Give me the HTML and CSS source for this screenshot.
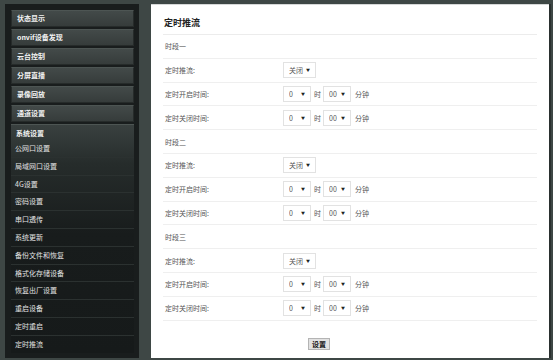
FILE: index.html
```html
<!DOCTYPE html>
<html lang="zh-CN">
<head>
    <meta charset="UTF-8">
    <meta name="viewport" content="width=device-width, initial-scale=1.0">
    <title>定时推流</title>
    <link rel="stylesheet" href="styles.css">
</head>
<body>
    <div class="page">
        <aside class="sidebar">
            <a class="menu-head">状态显示</a>
            <a class="menu-head">onvif设备发现</a>
            <a class="menu-head">云台控制</a>
            <a class="menu-head">分屏直播</a>
            <a class="menu-head">录像回放</a>
            <a class="menu-head">通道设置</a>
            <div class="menu-group">
                <a class="menu-head active">系统设置</a>
                <ul class="submenu">
                    <li>公网口设置</li>
                    <li>局域网口设置</li>
                    <li>4G设置</li>
                    <li>密码设置</li>
                    <li>串口透传</li>
                    <li>系统更新</li>
                    <li>备份文件和恢复</li>
                    <li>格式化存储设备</li>
                    <li>恢复出厂设置</li>
                    <li>重启设备</li>
                    <li>定时重启</li>
                    <li>定时推流</li>
                </ul>
            </div>
        </aside>

        <main class="content">
            <h2 class="title">定时推流</h2>

            <div class="row">时段一</div>
            <div class="row">
                <label class="label">定时推流:</label>
                <span class="sel sel-wide"><select><option>关闭</option><option>开启</option></select></span>
            </div>
            <div class="row">
                <label class="label">定时开启时间:</label>
                <span class="sel"><select><option>0</option></select></span>
                <span class="unit">时</span>
                <span class="sel"><select><option>00</option></select></span>
                <span class="unit unit-min">分钟</span>
            </div>
            <div class="row">
                <label class="label">定时关闭时间:</label>
                <span class="sel"><select><option>0</option></select></span>
                <span class="unit">时</span>
                <span class="sel"><select><option>00</option></select></span>
                <span class="unit unit-min">分钟</span>
            </div>

            <div class="row">时段二</div>
            <div class="row">
                <label class="label">定时推流:</label>
                <span class="sel sel-wide"><select><option>关闭</option><option>开启</option></select></span>
            </div>
            <div class="row">
                <label class="label">定时开启时间:</label>
                <span class="sel"><select><option>0</option></select></span>
                <span class="unit">时</span>
                <span class="sel"><select><option>00</option></select></span>
                <span class="unit unit-min">分钟</span>
            </div>
            <div class="row">
                <label class="label">定时关闭时间:</label>
                <span class="sel"><select><option>0</option></select></span>
                <span class="unit">时</span>
                <span class="sel"><select><option>00</option></select></span>
                <span class="unit unit-min">分钟</span>
            </div>

            <div class="row">时段三</div>
            <div class="row">
                <label class="label">定时推流:</label>
                <span class="sel sel-wide"><select><option>关闭</option><option>开启</option></select></span>
            </div>
            <div class="row">
                <label class="label">定时开启时间:</label>
                <span class="sel"><select><option>0</option></select></span>
                <span class="unit">时</span>
                <span class="sel"><select><option>00</option></select></span>
                <span class="unit unit-min">分钟</span>
            </div>
            <div class="row">
                <label class="label">定时关闭时间:</label>
                <span class="sel"><select><option>0</option></select></span>
                <span class="unit">时</span>
                <span class="sel"><select><option>00</option></select></span>
                <span class="unit unit-min">分钟</span>
            </div>

            <div class="actions">
                <button class="btn">设置</button>
            </div>
        </main>
    </div>
</body>
</html>
```

FILE: styles.css
```css
body {
    margin: 0;
    padding: 0;
    background-color: #3e4745;
    font-family: "Noto Sans CJK SC", "Liberation Sans", sans-serif;
    font-size: 7px;
}

.page {
    display: flex;
    gap: 12px;
    padding: 4px 0 0 5px;
    height: 360px;
    box-sizing: border-box;
}

.sidebar {
    width: 134px;
    height: 354px;
    padding: 6px 5px 0 6px;
    box-sizing: border-box;
    background-color: #191d1d;
    display: flex;
    flex-direction: column;
}

.menu-head {
    display: block;
    height: 17px;
    line-height: 15px;
    margin-bottom: 2px;
    padding-left: 5px;
    box-sizing: border-box;
    background: linear-gradient(#434a49, #363c3b);
    border: 1px solid #262b2a;
    border-top-color: #4d5553;
    color: #f2f2f2;
    font-weight: bold;
}

.menu-group {
    background: linear-gradient(#3a4140 0px, #262c2b 40px, #181c1c 110px, #161a1a);
}

.menu-head.active {
    height: 16px;
    margin-bottom: 0;
    background: transparent;
    border: none;
    border-top: 1px solid #4d5553;
    line-height: 16px;
}

.submenu {
    list-style: none;
    margin: 0;
    padding: 0;
}

.submenu li {
    height: 16.8px;
    line-height: 16.8px;
    border-bottom: 1px solid #2b3130;
    padding-left: 4px;
    color: #e2e2e2;
}

.submenu li:last-child {
    border-bottom: none;
}

.content {
    width: 398px;
    height: 354px;
    padding: 8px 12px 0 12px;
    box-sizing: border-box;
    background-color: #fff;
    border-top: 1px solid #d6d8d8;
    box-shadow: 2px 0 0 #2a302f;
}

.title {
    margin: 0;
    height: 21px;
    line-height: 20px;
    padding-left: 1px;
    font-size: 9px;
    color: #222;
    border-bottom: 1px solid #ececec;
}

.row {
    display: flex;
    align-items: center;
    height: 23.8px;
    padding-left: 2px;
    box-sizing: border-box;
    border-bottom: 1px solid #efefef;
    color: #555;
}

.label {
    width: 118px;
}

.sel {
    position: relative;
    display: inline-block;
    width: 28px;
    height: 16px;
}

.sel-wide {
    width: 33px;
}

.sel select {
    appearance: none;
    -webkit-appearance: none;
    width: 100%;
    height: 100%;
    margin: 0;
    padding: 0 0 0 5px;
    border: 1px solid #e2e2e2;
    border-radius: 0;
    background: #fff;
    font-family: inherit;
    font-size: 7px;
    color: #555;
    outline: none;
}

.sel::after {
    content: "\25BC";
    position: absolute;
    right: 6px;
    top: 5px;
    font-size: 4px;
    line-height: 6px;
    color: #222;
    pointer-events: none;
}

.unit {
    margin: 0 2px 0 3px;
    color: #555;
}

.unit-min {
    margin-left: 4px;
}

.actions {
    padding: 17px 0 0 145px;
}

.btn {
    width: 22px;
    height: 12px;
    padding: 0;
    background-color: #e1e1e1;
    border: 1px solid #b4b4b4;
    font-family: inherit;
    font-size: 7px;
    font-weight: bold;
    line-height: 10px;
    color: #111;
    cursor: pointer;
}
```
